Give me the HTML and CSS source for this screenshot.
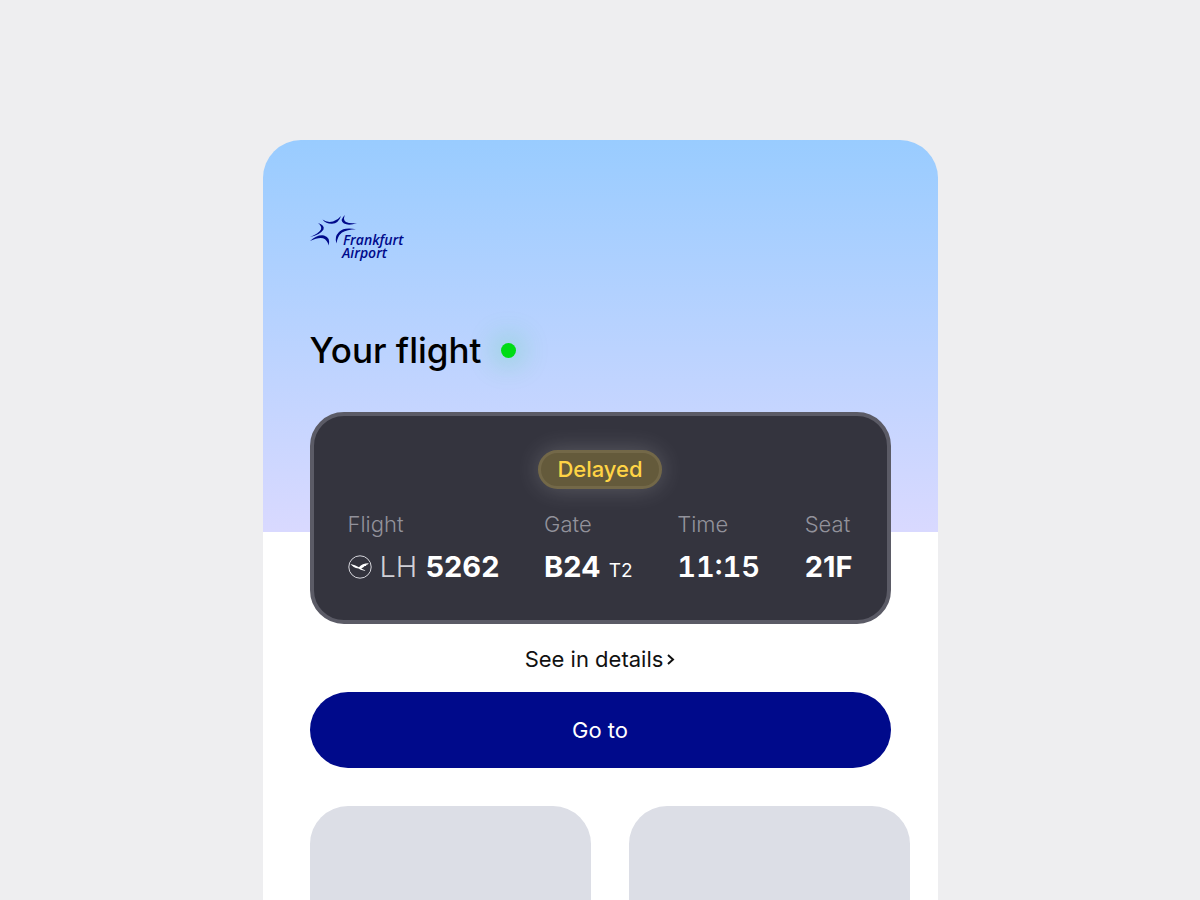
FILE: index.html
```html
<!DOCTYPE html>
<html lang="en">
<head>
<meta charset="utf-8">
<meta name="viewport" content="width=device-width, initial-scale=1">
<title>Your flight</title>
<link rel="stylesheet" href="styles.css">
</head>
<body>
<main class="screen">
  <header class="brand">
    <svg class="logo" viewBox="0 0 96 50" role="img" aria-label="Frankfurt Airport">
      <g class="logo-mark">
        <path d="M12.500 4.500Q17 8 23 6.500Q28 5 31 1Q28.500 8.500 22 8.800Q16 9 12.500 4.500Z"/>
        <path d="M35 0Q32.500 4.500 36 7Q40 9 47 8Q39 11 34 8.500Q29 5 35 0Z"/>
        <path d="M8 8Q15 10 13.500 14.500Q10 20 0 22Q8.500 18.500 11 14.500Q12 11 8 8Z"/>
        <path d="M0 26Q7 19.500 14 20.500Q21 22.500 18.500 30.500Q17.500 25 13 23.300Q8 22.300 0 26Z"/>
        <path d="M46 14.300Q34 12 29 17Q24 22 26.500 28.500Q27.500 21 32 17.500Q37 14.500 46 14.300Z"/>
      </g>
      <text class="logo-text" x="33" y="30">Frankfurt</text>
      <text class="logo-text" x="32" y="43">Airport</text>
    </svg>
  </header>
  <div class="heading">
    <h1 class="title">Your flight</h1>
    <span class="live-dot"></span>
  </div>
  <section class="flight-card">
    <span class="badge">Delayed</span>
    <dl class="facts">
      <div class="fact">
        <dt>Flight</dt>
        <dd>
          <svg class="airline" viewBox="0 0 24 24" aria-hidden="true">
            <circle cx="12" cy="12" r="11.200"/>
            <path d="M2.500 9Q7 10 11 12.200Q14 8.300 20.800 8.300L19.800 9.500L18.800 9.600L17.800 10.900L16.600 11L15.400 12.200Q13.800 13.200 13.200 13.400L17.500 15.500L16.500 15.800Q12 15 10.500 13.600Q5 12.500 2.500 9Z"/>
          </svg>
          <span class="flight-number"><span class="carrier">LH</span> <strong>5262</strong></span>
        </dd>
      </div>
      <div class="fact">
        <dt>Gate</dt>
        <dd><strong>B24</strong> <span class="terminal">T2</span></dd>
      </div>
      <div class="fact">
        <dt>Time</dt>
        <dd><strong class="time">11:15</strong></dd>
      </div>
      <div class="fact">
        <dt>Seat</dt>
        <dd><strong class="seat">21F</strong></dd>
      </div>
    </dl>
  </section>
  <a class="details" href="#details">See in details
    <svg class="chevron" viewBox="0 0 8 12" aria-hidden="true"><path d="M1 2L6 6.500L1 11"/></svg>
  </a>
  <button class="primary" type="button">Go to</button>
  <div class="tiles">
    <div class="tile"></div>
    <div class="tile"></div>
  </div>
</main>
</body>
</html>
```
FILE: styles.css
```css
* { box-sizing: border-box; }

body {
  margin: 0;
  min-height: 100vh;
  padding: 140px 24px 0;
  background: #eeeef0;
  color: #000;
  font-family: Inter, "Liberation Sans", sans-serif;
  display: flex;
  justify-content: center;
}

.screen {
  width: 100%;
  max-width: 675px;
  padding: 75px 47px 0;
  border-radius: 38px 38px 0 0;
  background: #fff linear-gradient(#99ccff, #d9d9ff) 0 0 / 100% 392px no-repeat;
  display: flex;
  flex-direction: column;
  overflow: hidden;
}

.logo {
  display: block;
  width: 96px;
  height: 50px;
  overflow: visible;
  fill: #000a8b;
}

.logo-text {
  font: italic 600 14px "Open Sans", sans-serif;
}

.heading {
  display: flex;
  align-items: center;
  gap: 20px;
  margin-top: 59px;
}

.title {
  margin: 0;
  font-size: 35px;
  line-height: 52px;
  font-weight: 500;
}

.live-dot {
  width: 15px;
  height: 15px;
  border-radius: 50%;
  background: #00dc14;
  box-shadow: 0 0 28px 6px rgba(0, 220, 60, 0.25);
}

.flight-card {
  margin-top: 36px;
  padding: 34px 34px 27px;
  border: 4px solid #5b5b66;
  border-radius: 34px;
  background: #34343e;
  display: flex;
  flex-direction: column;
  align-items: center;
}

.badge {
  padding: 0 16px;
  border: 3px solid #736848;
  border-radius: 20px;
  background: #645a3b;
  box-shadow: 0 0 24px rgba(255, 255, 255, 0.2);
  color: #ffd445;
  font-size: 22px;
  line-height: 33px;
  font-weight: 500;
}

.facts {
  align-self: stretch;
  margin: 18px 0 0;
  display: flex;
  flex-wrap: wrap;
  justify-content: space-between;
  gap: 8px;
}

.fact dt {
  color: #92929b;
  font-size: 22px;
  line-height: 34px;
  font-weight: 300;
}

.fact dd {
  display: flex;
  align-items: baseline;
  gap: 8px;
  margin: 4px 0 0;
  color: #fff;
  font-size: 29px;
  line-height: 44px;
}

.fact strong { font-weight: 700; }

.fact .time {
  font-weight: 600;
  font-variant-numeric: tabular-nums;
}

.carrier {
  color: #d0d0d6;
  font-weight: 300;
}

.terminal { font-size: 19px; }

.airline {
  align-self: center;
  width: 24px;
  height: 24px;
  fill: #fff;
}

.airline circle {
  fill: none;
  stroke: #d6d6dc;
}

.details {
  align-self: center;
  display: flex;
  align-items: center;
  gap: 4px;
  margin-top: 18px;
  color: #111;
  font-size: 22px;
  line-height: 34px;
  text-decoration: none;
}

.chevron {
  width: 8px;
  height: 12px;
  fill: none;
  stroke: #111;
  stroke-width: 2;
}

.primary {
  margin-top: 16px;
  padding: 21px 24px;
  border: 0;
  border-radius: 38px;
  background: #000a8b;
  color: #fff;
  font: 400 22px/34px Inter, "Liberation Sans", sans-serif;
}

.tiles {
  flex: 1;
  display: grid;
  grid-template-columns: 1fr 1fr;
  gap: 38px;
  margin: 38px -19px 0 0;
}

.tile {
  border-radius: 38px 38px 0 0;
  background: #dcdee6;
}
```
